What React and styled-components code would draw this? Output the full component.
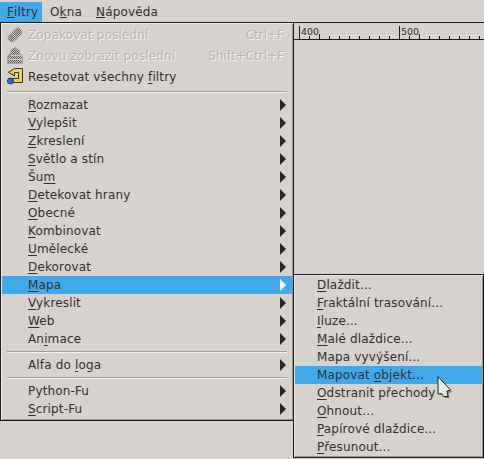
import React from 'react';
import styled, { createGlobalStyle } from 'styled-components';

const filterRows = [
  { label: '_Rozmazat' }, { label: '_Vylepšit' }, { label: '_Zkreslení' }, { label: '_Světlo a stín' },
  { label: 'Šu_m' }, { label: '_Detekovat hrany' }, { label: '_Obecné' }, { label: '_Kombinovat' },
  { label: '_Umělecké' }, { label: '_Dekorovat' }, { label: '_Mapa', active: true }, { label: '_Vykreslit' },
  { label: '_Web' }, { label: 'An_imace' },
];

const mapRows = [
  { label: '_Dlaždit...' }, { label: '_Fraktální trasování...' }, { label: '_Iluze...' },
  { label: '_Malé dlaždice...' }, { label: 'Mapa vyvýšení...' }, { label: 'Mapovat _objekt...', active: true },
  { label: '_Odstranit přechody' }, { label: '_Ohnout...' }, { label: '_Papírové dlaždice...' }, { label: '_Přesunout...' },
];

const Label = ({ text }) => {
  const at = text.indexOf('_');
  if (at < 0) return text;
  return <>{text.slice(0, at)}<u>{text[at + 1]}</u>{text.slice(at + 2)}</>;
};

const Ruler = () => {
  const ticks = [];
  for (let x = 309; x < 484; x += 10) {
    if ((x - 299) % 100 !== 0) ticks.push(x);
  }
  return (
    <svg width="190" height="16" viewBox="294 23 190 16" style={{ display: 'block' }}>
      {[299, 399].map(x => <rect key={x} x={x} y="26" width="1" height="13" fill="#1d1a18" />)}
      {ticks.map(x => <rect key={x} x={x} y={(x - 319) % 100 === 0 ? 34 : 36} width="1" height="5" fill="#1d1a18" />)}
      <text x="301" y="35" fontFamily="DejaVu Sans" fontSize="9.4" fill="#2e2a28">400</text>
      <text x="401" y="35" fontFamily="DejaVu Sans" fontSize="9.4" fill="#2e2a28">500</text>
    </svg>
  );
};

const Arrow = () => (
  <svg width="6" height="12" viewBox="0 0 6 12"><path d="M0 0L6 6L0 12Z" fill="currentColor" /></svg>
);

const ResetIcon = () => (
  <svg width="16" height="17" viewBox="0 0 16 17">
    <path d="M7.5 .5H15.5V14.5H5.5V10.5H11.5V4.5H7.5V8L1.5 4.3L7.5 .5Z" fill="#edd63a" stroke="#3b3410" strokeWidth="1" strokeLinejoin="round" />
    <circle cx="3.5" cy="13" r="3" fill="#3a6cb4" stroke="#1d3a70" strokeWidth="1" />
  </svg>
);

const RepeatIcon = () => (
  <svg width="16" height="16" viewBox="0 0 16 16">
    <defs>
      <pattern id="dither" width="2" height="2" patternUnits="userSpaceOnUse">
        <rect width="2" height="2" fill="#c4c0bc" />
        <rect width="1" height="1" fill="#66625e" /><rect x="1" y="1" width="1" height="1" fill="#66625e" />
      </pattern>
    </defs>
    <path d="M1.5 9L9 1.5C11.5 -.5 16.5 4 14.5 7L7 14.5C4 16.5 -.5 11.5 1.5 9Z" fill="url(#dither)" stroke="#a6a29e" strokeWidth="1" />
    <path d="M5.5 6.5L9.5 10.5" stroke="#e4e2df" strokeWidth="1" />
  </svg>
);

const ReshowIcon = () => (
  <svg width="16" height="17" viewBox="0 0 16 17">
    <path d="M8 .5L12.5 3.5V6L15.5 9.5V16.5H.5V9.5L3.5 6V3.5Z" fill="url(#dither)" stroke="#a6a29e" strokeWidth="1" />
    <path d="M3 8.5H13M1 12.5H15" stroke="#d0ccc8" strokeWidth="1" />
  </svg>
);

const Cursor = () => (
  <CursorMark width="16" height="24" viewBox="0 0 16 24">
    <path d="M2.5 2.5L15 16L11.5 17L12.5 22L8 22L6 19L3 19Z" fill="#7d7977" />
    <path d="M1 .5L13.5 14L10 15L11 20.5L6.5 20.5L4.5 17.5L1 18Z" fill="#ecebe9" stroke="#2a2826" strokeWidth="1" strokeLinejoin="round" />
  </CursorMark>
);

const App = () => (
  <Screen>
    <Global />
    <MenuBar>
      <BarItem $open><Label text="_Filtry" /></BarItem>
      <BarItem><Label text="O_kna" /></BarItem>
      <BarItem><Label text="_Nápověda" /></BarItem>
    </MenuBar>
    <Workspace>
      <Ruler />
    </Workspace>

    <MainMenu>
      <IconRow $disabled>
        <IconSlot><RepeatIcon /></IconSlot>
        <RowText>Zopakovat poslední</RowText>
        <Shortcut>Ctrl+F</Shortcut>
      </IconRow>
      <IconRow $disabled>
        <IconSlot><ReshowIcon /></IconSlot>
        <RowText>Znovu zobrazit poslední</RowText>
        <Shortcut>Shift+Ctrl+F</Shortcut>
      </IconRow>
      <IconRow>
        <IconSlot><ResetIcon /></IconSlot>
        <RowText><Label text="Resetovat všechny _filtry" /></RowText>
      </IconRow>
      <Separator $tall />
      {filterRows.map(row => (
        <Row key={row.label} $active={row.active}>
          <RowText><Label text={row.label} /></RowText>
          <RowArrow $active={row.active}><Arrow /></RowArrow>
        </Row>
      ))}
      <Separator />
      <Row><RowText><Label text="Alfa do _loga" /></RowText><RowArrow><Arrow /></RowArrow></Row>
      <Separator />
      <Row><RowText>Python-Fu</RowText><RowArrow><Arrow /></RowArrow></Row>
      <Row><RowText><Label text="_Script-Fu" /></RowText><RowArrow><Arrow /></RowArrow></Row>
    </MainMenu>

    <SubMenu>
      {mapRows.map(row => (
        <Row key={row.label} $active={row.active}>
          <RowText><Label text={row.label} /></RowText>
        </Row>
      ))}
    </SubMenu>
    <Cursor />
  </Screen>
);

export default App;

// Style
const Global = createGlobalStyle`
  html, body { margin: 0; padding: 0; background: #d6d2ce; }
`;

const Screen = styled.div`
  position: relative;
  width: 484px;
  height: 459px;
  overflow: hidden;
  background: #d6d2ce;
  font-family: "DejaVu Sans", sans-serif;
  font-size: 12px;
  color: #332f2d;
`;

const MenuBar = styled.div`
  display: flex;
  gap: 2px;
  height: 22px;
  padding-top: 2px;
  box-sizing: border-box;
  letter-spacing: 0.15px;
`;

const BarItem = styled.div`
  display: flex;
  align-items: center;
  padding: 0 6px;
  ${p => p.$open && 'background: #41a9e9; width: 42px; box-sizing: border-box; padding-left: 7px; padding-right: 0;'}
`;

const Workspace = styled.div`
  margin-left: 294px;
  border-top: 1px solid #1d1a18;
  border-bottom: 1px solid #1d1a18;
`;

const Popup = styled.div`
  position: absolute;
  box-sizing: border-box;
  background: #d6d2ce;
  border: 1px solid #1d1a18;
  box-shadow: inset 1px 1px 0 #efedeb, inset -1px -1px 0 #9a9692;
  padding: 1px;
`;

const MainMenu = styled(Popup)`
  left: 0;
  top: 22px;
  width: 294px;
  height: 399px;
`;

const SubMenu = styled(Popup)`
  left: 293px;
  top: 274px;
  width: 191px;
  height: 184px;
`;

const Row = styled.div`
  display: flex;
  align-items: center;
  justify-content: space-between;
  height: 18px;
  padding: 0 6px 0 26px;
  ${p => p.$active && 'background: #41a9e9;'}
  ${SubMenu} & { padding-left: 22px; }
`;

const RowArrow = styled.span`
  display: flex;
  color: ${p => (p.$active ? '#ffffff' : '#2a2624')};
`;

const IconRow = styled.div`
  display: flex;
  align-items: center;
  height: 21px;
  padding: 0 8px 0 5px;
  ${p => p.$disabled && 'color: #b9b5b1; text-shadow: 1px 1px 0 #f6f4f2;'}
`;

const IconSlot = styled.span`
  display: flex;
  width: 21px;
  text-shadow: none;
`;

const RowText = styled.span`
  white-space: pre;
  letter-spacing: 0.15px;
  u { text-underline-offset: 2px; }
`;

const Shortcut = styled.span`
  margin-left: auto;
`;

const Separator = styled.div`
  height: 2px;
  margin: ${p => (p.$tall ? '4px 5px 3px' : '3px 5px')};
  background: linear-gradient(#a09c98 50%, #f4f2f0 50%);
`;

const CursorMark = styled.svg`
  position: absolute;
  left: 437px;
  top: 376px;
`;
